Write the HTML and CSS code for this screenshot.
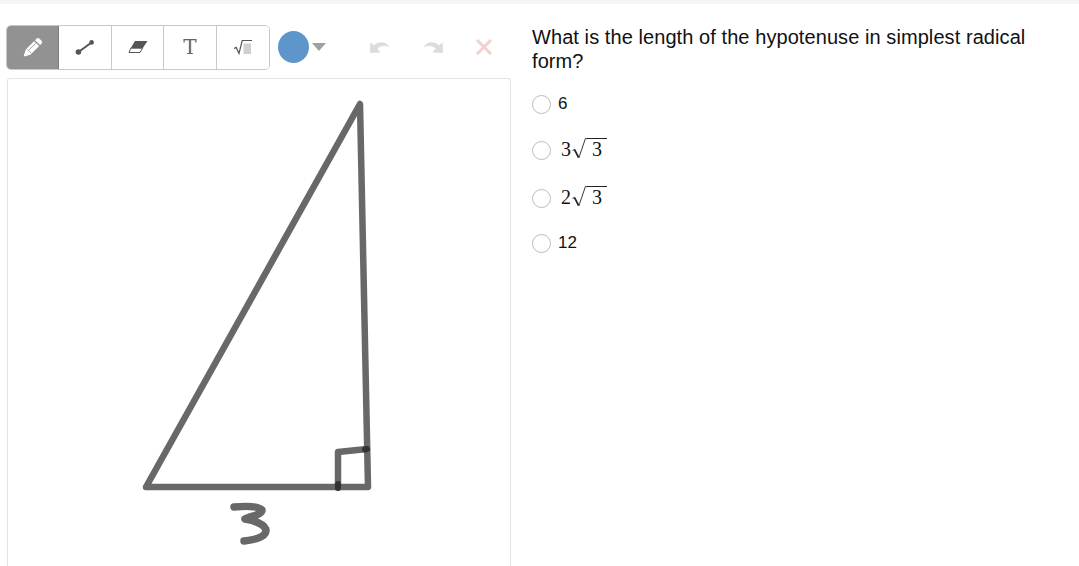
FILE: index.html
```html
<!DOCTYPE html>
<html lang="en">
<head>
<meta charset="utf-8">
<title>Hypotenuse question</title>
<link rel="stylesheet" href="styles.css">
</head>
<body>
<div class="topstrip"></div>
<main class="layout">
  <section class="left">
    <div class="toolbar">
      <div class="tools">
        <button class="tool active" aria-label="Pencil">
          <svg width="20" height="20" viewBox="0 0 20 20"><path class="pencil" d="M13.6 1.4 Q15 0.6 16.2 1.6 L18.6 3.8 Q19.6 5 18.6 6.4 L17.2 8 L12 3.2 Z M11 4.2 L16.2 9 L7.6 17.4 L1.8 19.4 L0.8 18.4 L2.8 12.6 Z"/><path class="pencil-lead" d="M4 12.4 L8 16 M12.5 6.5 L5.8 13" /></svg>
        </button>
        <button class="tool" aria-label="Line">
          <svg width="20" height="18" viewBox="0 0 20 18"><path class="ink-line" d="M3.5 14 L16.5 4.5"/><circle class="ink" cx="3.4" cy="14" r="2.8"/><circle class="ink" cx="16.6" cy="4.4" r="2.3"/></svg>
        </button>
        <button class="tool" aria-label="Eraser">
          <svg width="20" height="16" viewBox="0 0 20 16"><path class="ink" d="M7 2 H19.5 L14.8 9 H2.8 Z"/><path class="eraser-foot" d="M2.8 9.2 H14.5 L12 13.5 H1 Z"/></svg>
        </button>
        <button class="tool" aria-label="Text"><span class="t-glyph">T</span></button>
        <button class="tool" aria-label="Math">
          <svg width="20" height="16" viewBox="0 0 20 16"><path class="radical-icon" d="M1 9.5 L3.2 8.4 L6 14.5 L9.2 1.5 H19"/><rect class="box" x="10.5" y="4.5" width="7.5" height="10.5"/></svg>
        </button>
      </div>
      <div class="colour" aria-label="Colour"></div>
      <div class="caret"></div>
      <div class="actions">
        <svg width="22" height="16" viewBox="0 0 22 16"><path class="undo" d="M1 14 L1.4 3 L5 6.4 C10 1.6 17 2 21 8.6 C16.5 6.4 11.6 6.6 8.4 9.6 L11.6 13.4 Z"/></svg>
        <svg width="22" height="16" viewBox="0 0 22 16"><path class="undo" d="M21 14 L20.6 3 L17 6.4 C12 1.6 5 2 1 8.6 C5.5 6.4 10.4 6.6 13.6 9.6 L10.4 13.4 Z"/></svg>
        <svg width="18" height="18" viewBox="0 0 18 18"><path class="close" d="M2 2 L16 16 M16 2 L2 16"/></svg>
      </div>
    </div>
    <div class="canvas">
      <svg class="drawing" width="502" height="487" viewBox="8 79 502 487">
        <path class="stroke" d="M146 487 L360 104 L368 487 Z"/>
        <path class="stroke" d="M338 487 L338 452 L367 449"/>
        <path class="overlap" d="M338 484 L338 488 M365 449.5 L367 449"/>
        <path class="stroke three" d="M234 507 C245 506 258 506 262 510 C262 515 250 516 245 519 C252 520 266 524 266 531 C265 538 252 540 244 541"/>
      </svg>
    </div>
  </section>
  <section class="right">
    <p class="question">What is the length of the hypotenuse in simplest radical form?</p>
    <div class="options">
      <label class="option plain"><span class="radio"></span>6</label>
      <label class="option surd"><span class="radio"></span><span class="math"><span class="coef">3</span><svg class="root" width="15" height="21" viewBox="0 0 15 21"><path d="M0.5 12.5 L2.4 11.4" /><path class="heavy" d="M2.4 11.4 L6.6 19.5"/><path d="M6.8 20 L13.4 0.6 H15"/></svg><span class="radicand">3</span></span></label>
      <label class="option surd"><span class="radio"></span><span class="math"><span class="coef">2</span><svg class="root" width="15" height="21" viewBox="0 0 15 21"><path d="M0.5 12.5 L2.4 11.4" /><path class="heavy" d="M2.4 11.4 L6.6 19.5"/><path d="M6.8 20 L13.4 0.6 H15"/></svg><span class="radicand">3</span></span></label>
      <label class="option plain"><span class="radio"></span>12</label>
    </div>
  </section>
</main>
</body>
</html>
```
FILE: styles.css
```css
html, body {
  margin: 0;
  height: 566px;
  overflow: hidden;
  background: #fff;
  font-family: "Liberation Sans", Arial, sans-serif;
  color: #111;
}
.topstrip {
  height: 4px;
  background: #f5f5f5;
}
.layout {
  display: flex;
  align-items: flex-start;
}
.left {
  width: 504px;
  margin-left: 6px;
  padding-top: 21px;
}
.toolbar {
  display: flex;
  align-items: center;
  height: 44px;
}
.tools {
  display: grid;
  grid-template-columns: 52px 53px 52px 53px 1fr;
  box-sizing: border-box;
  width: 264px;
  height: 45px;
  border: 1px solid #c8c8c8;
  border-radius: 5px;
  overflow: hidden;
  background: #fff;
  flex: none;
}
.tool {
  padding: 0;
  margin: 0;
  border: 0;
  border-right: 1px solid #c8c8c8;
  background: #fff;
  display: flex;
  align-items: center;
  justify-content: center;
}
.tool:last-child { border-right: 0; }
.tool.active { background: #929292; border-right-color: #7d7d7d; }
.tool svg { filter: blur(0.3px); }
.pencil { fill: #fff; }
.pencil-lead { stroke: #929292; stroke-width: 0.8; fill: none; }
.ink { fill: #555; }
.ink-line { stroke: #555; stroke-width: 2; fill: none; }
.eraser-foot { fill: #fff; stroke: #555; stroke-width: 1; }
.t-glyph {
  font-family: "DejaVu Serif", "Liberation Serif", serif;
  font-size: 20px;
  line-height: 1;
  color: #666;
}
.radical-icon { fill: none; stroke: #555; stroke-width: 1.2; }
.box { fill: #d0d0d0; }
.colour {
  width: 31px;
  height: 32px;
  margin-left: 8px;
  border-radius: 50%;
  background: #5e95cb;
  flex: none;
}
.caret {
  width: 0;
  height: 0;
  margin-left: 3px;
  border-left: 7px solid transparent;
  border-right: 7px solid transparent;
  border-top: 8px solid #a0a0a0;
  flex: none;
}
.actions {
  display: flex;
  align-items: center;
  gap: 31px;
  margin-left: 43px;
}
.actions svg { flex: none; }
.undo { fill: #dcdcdc; }
.close { stroke: #f1d0ce; stroke-width: 3; fill: none; }
.canvas {
  box-sizing: border-box;
  width: 504px;
  height: 488px;
  margin-top: 9px;
  margin-left: 1px;
  border: 1px solid #e3e3e3;
  border-bottom: 0;
  border-radius: 3px 3px 0 0;
  background: #fff;
  overflow: hidden;
}
.drawing { display: block; filter: blur(0.5px); }
.stroke {
  fill: none;
  stroke: #686868;
  stroke-width: 6.5;
  stroke-linecap: round;
  stroke-linejoin: round;
}
.three { stroke-width: 7.5; }
.overlap {
  fill: none;
  stroke: #333;
  stroke-width: 6;
  stroke-linecap: round;
}
.right {
  margin-left: 22px;
  padding-top: 21px;
  width: 510px;
}
.question {
  margin: 0;
  font-size: 20px;
  line-height: 24px;
  letter-spacing: 0.075px;
  color: #111;
}
.options {
  display: flex;
  flex-direction: column;
  margin-top: 21px;
}
.option {
  display: flex;
  align-items: center;
  font-size: 17px;
  line-height: 20px;
  height: 20px;
}
.option + .option { margin-top: 26px; }
.surd + .surd { margin-top: 28px; }
.surd + .plain { margin-top: 25px; }
.radio {
  box-sizing: border-box;
  width: 19px;
  height: 19px;
  margin-right: 7px;
  border: 1px solid #bdbdbd;
  border-radius: 50%;
  background: #fff;
  flex: none;
}
.math {
  display: flex;
  align-items: flex-start;
  font-family: "Liberation Serif", serif;
  font-size: 20px;
  height: 21px;
  margin: -3px 0 0 3px;
}
.coef { line-height: 21px; padding-top: 1px; }
.root { display: block; margin-left: 1px; flex: none; }
.root path { fill: none; stroke: #222; stroke-width: 0.9; }
.root .heavy { stroke-width: 1.7; }
.radicand {
  border-top: 1px solid #222;
  padding: 0 5px;
  line-height: 20px;
}
```
